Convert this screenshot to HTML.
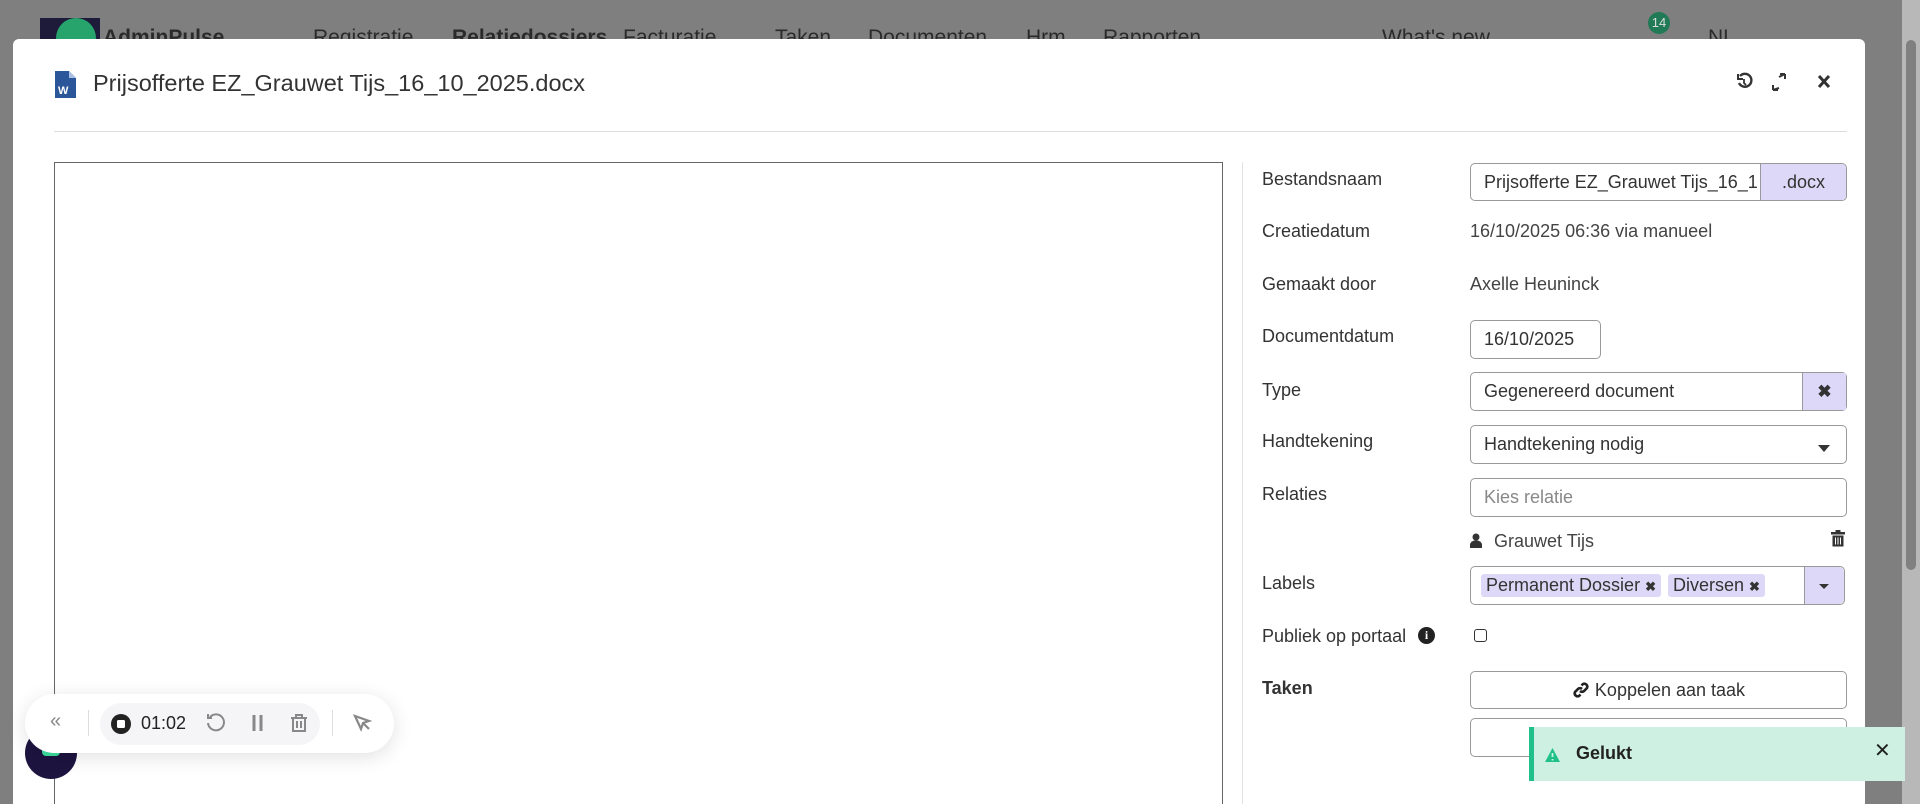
<!DOCTYPE html>
<html style="overflow:hidden;width:1920px;height:804px"><head><meta charset="utf-8"><style>
*{box-sizing:border-box;margin:0;padding:0}
body{width:1920px;height:804px;overflow:hidden;background:#7f7f7f;font-family:"Liberation Sans",sans-serif;color:#333;position:relative}
.nav{position:absolute;top:26px;font-size:21px;color:#2a2a2a;white-space:nowrap}
.modal{position:absolute;left:13px;top:39px;width:1852px;height:765px;background:#fff;border-radius:6px 6px 0 0}
.abs{position:absolute}
.lbl{position:absolute;left:1262px;font-size:18px;color:#333}
.inp{position:absolute;left:1470px;width:377px;border:1px solid #999;border-radius:5px;background:#fff;font-size:18px;padding-left:13px;display:flex;align-items:center;color:#333}
.val{position:absolute;left:1470px;font-size:18px;color:#444}
.tag{background:#ddd8f7;border-radius:3px;padding:1px 5px;margin-right:7px;font-size:18px}
</style></head><body>
<div class="abs" style="left:40px;top:18px;width:60px;height:26px;background:#1d1a3a"></div>
<div class="abs" style="left:56px;top:18px;width:40px;height:40px;border-radius:50%;background:#27a36c"></div>
<div class="nav" style="left:103px;font-weight:bold">AdminPulse</div>
<div class="nav" style="left:313px">Registratie</div>
<div class="nav" style="left:452px;font-weight:bold">Relatiedossiers</div>
<div class="nav" style="left:623px">Facturatie</div>
<div class="nav" style="left:775px">Taken</div>
<div class="nav" style="left:868px">Documenten</div>
<div class="nav" style="left:1026px">Hrm</div>
<div class="nav" style="left:1103px">Rapporten</div>
<div class="nav" style="left:1382px">What's new</div>
<div class="nav" style="left:1708px">NL</div>
<div class="abs" style="left:1648px;top:12px;width:22px;height:22px;border-radius:50%;background:#1f7a55;color:#ddd;font-size:13px;text-align:center;line-height:22px">14</div>
<div class="abs" style="left:1902px;top:0;width:18px;height:804px;background:#b8b8b8"></div>
<div class="abs" style="left:1906px;top:40px;width:10px;height:530px;background:#808080;border-radius:5px"></div>

<div class="modal"></div>
<svg class="abs" style="left:55px;top:71px" width="21" height="27" viewBox="0 0 21 27"><path d="M0 0H14L21 7V27H0Z" fill="#2b579a"/><path d="M14 0V7H21" fill="#a9c0e4"/><text x="3" y="23" font-size="11" fill="#fff" font-family="Liberation Sans" font-weight="bold">W</text></svg>
<div class="abs" style="left:93px;top:70px;font-size:23.5px;color:#333">Prijsofferte EZ_Grauwet Tijs_16_10_2025.docx</div>
<svg class="abs" style="left:1735px;top:72px" width="100" height="20" viewBox="0 0 100 20" fill="none" stroke="#333" stroke-width="2.4"><path d="M5 4a6.5 6.5 0 1 1-1 7"/><path d="M3 2v5h5" stroke-width="2"/><path d="M9 7v4l2 2" stroke-width="1.8"/><path d="M44 5l6-3M50 2v5M50 2h-5M44 16l-6 2M38 18v-5M38 18h5" stroke-width="2"/><path d="M84 4l10 11M94 4L84 15" stroke-width="3"/></svg>
<div class="abs" style="left:54px;top:131px;width:1793px;height:1px;background:#ddd"></div>
<div class="abs" style="left:54px;top:162px;width:1169px;height:660px;border:1px solid #666;border-bottom:none"></div>
<div class="abs" style="left:1242px;top:162px;width:1px;height:650px;background:#e2e2e2"></div>

<div class="lbl" style="top:169px">Bestandsnaam</div>
<div class="inp" style="top:163px;height:38px;overflow:hidden;white-space:nowrap">Prijsofferte EZ_Grauwet Tijs_16_1<div style="position:absolute;right:0;top:0;bottom:0;width:86px;background:#ddd8f7;border-left:1px solid #999;display:flex;align-items:center;justify-content:center">.docx</div></div>
<div class="lbl" style="top:221px">Creatiedatum</div><div class="val" style="top:221px">16/10/2025 06:36 via manueel</div>
<div class="lbl" style="top:274px">Gemaakt door</div><div class="val" style="top:274px">Axelle Heuninck</div>
<div class="lbl" style="top:326px">Documentdatum</div>
<div class="inp" style="top:320px;height:39px;width:131px">16/10/2025</div>
<div class="lbl" style="top:380px">Type</div>
<div class="inp" style="top:372px;height:39px">Gegenereerd document<div style="position:absolute;right:0;top:0;bottom:0;width:44px;background:#ddd8f7;border-left:1px solid #999;display:flex;align-items:center;justify-content:center;font-weight:bold;font-size:17px">✖</div></div>
<div class="lbl" style="top:431px">Handtekening</div>
<div class="inp" style="top:425px;height:39px">Handtekening nodig<svg style="position:absolute;right:16px;top:19px" width="12" height="7"><path d="M0 0h12L6 7z" fill="#333"/></svg></div>
<div class="lbl" style="top:484px">Relaties</div>
<div class="inp" style="top:478px;height:39px;color:#888">Kies relatie</div>
<svg class="abs" style="left:1470px;top:533px" width="12" height="15"><circle cx="6" cy="4" r="3.5" fill="#333"/><path d="M0 15v-3a5 4 0 0 1 12 0v3z" fill="#333"/></svg>
<div class="val" style="top:531px;left:1494px">Grauwet Tijs</div>
<svg class="abs" style="left:1831px;top:530px" width="14" height="17"><rect x="0" y="2" width="14" height="2.5" fill="#333"/><rect x="4.5" y="0" width="5" height="2.5" fill="#333"/><path d="M1.5 5.5h11v11h-11z" fill="#333"/><path d="M4.5 7.5v7M7 7.5v7M9.5 7.5v7" stroke="#fff" stroke-width="1"/></svg>
<div class="lbl" style="top:573px">Labels</div>
<div class="inp" style="top:566px;height:39px;padding-left:10px;width:375px;white-space:nowrap"><span class="tag">Permanent Dossier <b style="font-size:13px">✖</b></span><span class="tag">Diversen <b style="font-size:13px">✖</b></span><div style="position:absolute;right:0;top:0;bottom:0;width:40px;background:#ddd8f7;border-left:1px solid #999;border-radius:0 5px 5px 0"><svg style="position:absolute;left:14px;top:17px" width="10" height="5"><path d="M0 0h10L5 5z" fill="#333"/></svg></div></div>
<div class="lbl" style="top:626px">Publiek op portaal</div>
<div class="abs" style="left:1418px;top:627px;width:17px;height:17px;border-radius:50%;background:#222;color:#fff;font-size:12px;font-weight:bold;text-align:center;line-height:17px;font-family:'Liberation Serif',serif">i</div>
<div class="abs" style="left:1474px;top:629px;width:13px;height:13px;border:1.5px solid #333;border-radius:3px"></div>
<div class="lbl" style="top:678px;font-weight:bold">Taken</div>
<div class="inp" style="top:671px;height:38px;justify-content:center;padding:0"><svg width="18" height="18" viewBox="0 0 18 18" fill="none" stroke="#222" stroke-width="2.6" style="margin-right:5px"><path d="M8 10a3 3 0 0 0 4 0l3-3a3 3 0 0 0-4-4l-1.5 1.5"/><path d="M10 8a3 3 0 0 0-4 0l-3 3a3 3 0 0 0 4 4l1.5-1.5"/></svg>Koppelen aan taak</div>
<div class="inp" style="top:718px;height:39px"></div>
<div class="abs" style="left:1529px;top:727px;width:376px;height:54px;background:#cdf0e2;border-left:5px solid #1fc08a"></div>
<svg class="abs" style="left:1545px;top:748px" width="15" height="14"><path d="M7.5 0L15 14H0z" fill="#1fc08a"/><path d="M7.5 5v4M7.5 11v1.5" stroke="#cdf0e2" stroke-width="1.8"/></svg>
<div class="abs" style="left:1576px;top:743px;font-size:18px;font-weight:bold;color:#222">Gelukt</div>
<div class="abs" style="left:1874px;top:738px;font-size:20px;color:#222">✕</div>

<div class="abs" style="left:25px;top:727px;width:52px;height:52px;border-radius:50%;background:#1d1440"></div>
<div class="abs" style="left:42px;top:738px;width:18px;height:18px;background:#3ee0a0;border-radius:4px"></div>
<div class="abs" style="left:25px;top:694px;width:369px;height:59px;border-radius:30px;background:#fff;box-shadow:0 4px 20px rgba(0,0,0,.12)"></div>
<div class="abs" style="left:100px;top:703px;width:220px;height:42px;border-radius:21px;background:#f5f5f7"></div>
<div class="abs" style="left:50px;top:710px;font-size:20px;color:#888">«</div>
<div class="abs" style="left:88px;top:710px;width:1px;height:26px;background:#ddd"></div>
<div class="abs" style="left:332px;top:710px;width:1px;height:26px;background:#ddd"></div>
<svg class="abs" style="left:110px;top:713px" width="22" height="22"><circle cx="11" cy="11" r="10" fill="#222"/><rect x="7" y="7" width="8" height="8" rx="1.5" fill="#fff"/></svg>
<div class="abs" style="left:141px;top:713px;font-size:18px;color:#222">01:02</div>
<svg class="abs" style="left:205px;top:711px" width="110" height="24" fill="none" stroke="#888" stroke-width="2"><path d="M5 6a8 8 0 1 1-2 6"/><path d="M3 3v4h4"/><path d="M49 4v16M56 4v16" stroke-width="3"/><path d="M86 7h16M91 7V4h6v3M88 7v13h12V7M92 10v7M96 10v7"/></svg>
<svg class="abs" style="left:352px;top:713px" width="20" height="20" fill="none" stroke="#888" stroke-width="2.2"><path d="M3 3l14 5-6 2-2 6zM11 10l6 6"/></svg>
</body></html>
